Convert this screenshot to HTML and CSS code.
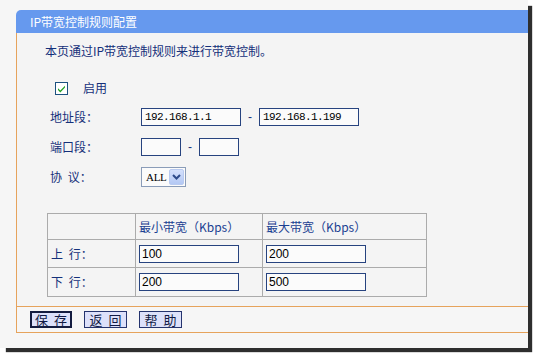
FILE: index.html
```html
<!DOCTYPE html>
<html lang="zh-CN">
<head>
<meta charset="utf-8">
<title>IP带宽控制规则配置</title>
<link rel="stylesheet" href="styles.css">
</head>
<body>
<div class="shot">
  <div class="panel">
    <div class="panel-head">IP带宽控制规则配置</div>
    <div class="panel-body">
      <p class="intro">本页通过IP带宽控制规则来进行带宽控制。</p>
      <div class="enable-row">
        <span class="checkbox"><svg width="13" height="13" viewBox="0 0 13 13"><rect x="0.5" y="0.5" width="12" height="12" fill="#fff" stroke="#1c5180"/><path d="M3 6.2 L5.3 8.6 L10 3.8 L10 5.6 L5.3 10.4 L3 8 Z" fill="#21a121"/></svg></span>
        <span class="enable-label">启用</span>
      </div>
      <div class="form-row">
        <span class="label">地址段：</span>
        <input class="field ip" type="text" value="192.168.1.1">
        <span class="dash">-</span>
        <input class="field ip" type="text" value="192.168.1.199">
      </div>
      <div class="form-row">
        <span class="label">端口段：</span>
        <input class="field ip port" type="text" value="">
        <span class="dash">-</span>
        <input class="field ip port" type="text" value="">
      </div>
      <div class="form-row">
        <span class="label">协 议：</span>
        <div class="select">
          <span class="select-text">ALL</span>
          <span class="select-arrow"><svg width="9" height="6" viewBox="0 0 9 6"><path d="M1 1 L4.5 4.5 L8 1" fill="none" stroke="#2d4a8a" stroke-width="2"/></svg></span>
        </div>
      </div>
      <table class="bw">
        <colgroup><col class="c1"><col class="c2"><col class="c3"></colgroup>
        <tr class="r-head"><td></td><td class="th">最小带宽（Kbps）</td><td class="th">最大带宽（Kbps）</td></tr>
        <tr class="r-up"><td class="rl">上 行：</td><td><input class="field num" type="text" value="100"></td><td><input class="field num" type="text" value="200"></td></tr>
        <tr class="r-down"><td class="rl">下 行：</td><td><input class="field num" type="text" value="200"></td><td><input class="field num" type="text" value="500"></td></tr>
      </table>
    </div>
    <div class="panel-foot">
      <button class="btn btn-save" type="button">保 存</button>
      <button class="btn" type="button">返 回</button>
      <button class="btn" type="button">帮 助</button>
    </div>
  </div>
</div>
</body>
</html>
```

FILE: styles.css
```css
* { box-sizing: border-box; }
html, body { margin: 0; padding: 0; }
body {
  width: 533px;
  height: 353px;
  overflow: hidden;
  background: #ffffff;
  font-family: "Noto Sans CJK SC", "Liberation Sans", sans-serif;
  font-size: 12px;
  color: #14307a;
}
.shot {
  width: 528px;
  height: 348px;
  background: #f6f6f6;
  padding: 10px 0 0 16px;
  box-shadow: 5px 5px 1px -1px #2e2e2e;
}
.panel { width: 512px; }
.panel-head {
  height: 23px;
  line-height: 23px;
  background: #6699ee;
  color: #ffffff;
  border-top-left-radius: 5px;
  padding-left: 14px;
}
.panel-body {
  height: 273px;
  border-left: 1px solid #e6a35c;
  background: #f4f4f4;
  display: flex;
  flex-direction: column;
}
.intro {
  margin: 0;
  height: 36px;
  line-height: 36px;
  padding-left: 28px;
}
.enable-row {
  height: 38px;
  display: flex;
  align-items: center;
  padding-left: 38px;
}
.checkbox { display: block; width: 13px; height: 13px; }
.checkbox svg { display: block; }
.enable-label { margin-left: 15px; line-height: 14px; }
.form-row {
  height: 20px;
  display: flex;
  align-items: center;
  padding-left: 33px;
  margin-bottom: 10px;
}
.form-row:last-of-type { margin-bottom: 0; }
.label { width: 91px; line-height: 14px; word-spacing: 3px; }
.field {
  margin: 0;
  height: 18px;
  border: 1px solid #27437f;
  background: #fbfbfb;
  color: #000;
  outline: none;
}
.ip {
  width: 100px;
  padding: 0 3px;
  font-family: "Liberation Mono", monospace;
  font-size: 11px;
  letter-spacing: -0.6px;
}
.port { width: 40px; }
.dash {
  width: 18px;
  text-align: center;
  font-family: "Liberation Sans", sans-serif;
  color: #14307a;
}
.select {
  width: 45px;
  height: 20px;
  border: 1px solid #8a9cb8;
  background: #fbfbfb;
  display: flex;
  align-items: center;
  justify-content: space-between;
  padding: 0 1px 0 4px;
}
.select-text {
  font-family: "Liberation Serif", serif;
  font-size: 11px;
  letter-spacing: -0.3px;
  color: #000;
}
.select-arrow {
  width: 15px;
  height: 16px;
  background: linear-gradient(#d4e0fc, #b3c8f4);
  border: 1px solid #b9caf0;
  border-radius: 2px;
  display: flex;
  align-items: center;
  justify-content: center;
}
.select-arrow svg { display: block; }
.bw {
  margin: 26px 0 0 30px;
  width: 379px;
  border-collapse: collapse;
  table-layout: fixed;
}
.c1 { width: 88px; }
.c2 { width: 127px; }
.c3 { width: 164px; }
.bw td {
  border: 1px solid #ababab;
  padding: 0 0 0 3px;
  vertical-align: middle;
  line-height: 14px;
}
.rl { word-spacing: 3px; }
.r-head { height: 26px; }
.r-up { height: 28px; }
.r-down { height: 29px; }
.th { color: #1b3f92; }
.num {
  width: 100px;
  padding: 0 2px;
  font-family: "Liberation Sans", sans-serif;
  font-size: 12px;
  display: block;
}
.panel-foot {
  height: 27px;
  border-left: 1px solid #e6a35c;
  border-top: 1px solid #e6a35c;
  border-bottom: 1px solid #e6a35c;
  background: #f6f6f6;
  display: flex;
  align-items: center;
  gap: 12px;
  padding-left: 13px;
}
.btn {
  margin: 0;
  width: 43px;
  height: 17px;
  padding: 0;
  border: 1px solid #25346e;
  background: #dde1fa;
  color: #111a44;
  font-family: "Noto Sans CJK SC", sans-serif;
  font-size: 13px;
  line-height: 15px;
  word-spacing: 3px;
}
.btn-save {
  width: 42px;
  border: 2px solid #141c40;
  line-height: 13px;
}
```
